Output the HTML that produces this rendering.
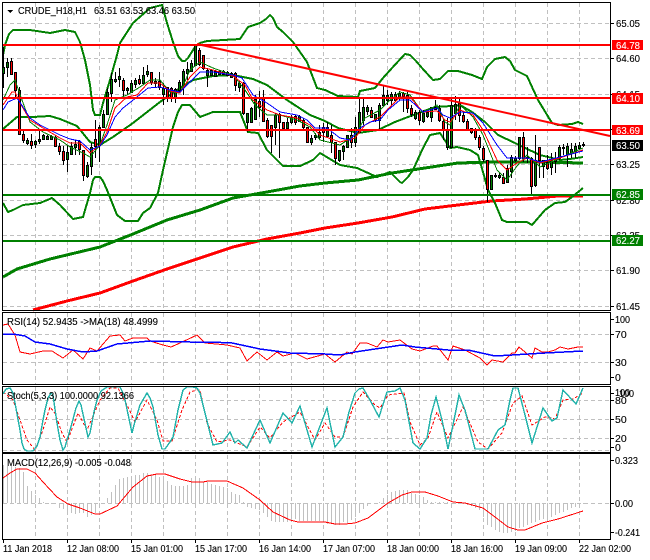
<!DOCTYPE html>
<html>
<head>
<meta charset="utf-8">
<style>
html,body{margin:0;padding:0;background:#fff;width:650px;height:560px;overflow:hidden}
svg{display:block;position:absolute;left:0;top:0}
text{font-family:"Liberation Sans",sans-serif;font-size:10.5px;fill:#000;stroke:#000;stroke-width:.12px}
.w{fill:#fff;stroke:#fff}
polyline{fill:none;shape-rendering:crispEdges}
.c{shape-rendering:crispEdges}
</style>
</head>
<body>
<svg width="650" height="560" viewBox="0 0 650 560" xmlns="http://www.w3.org/2000/svg">
<rect width="650" height="560" fill="#fff"/>
<!-- grid -->
<g class="c" stroke="#c0c0c0" stroke-width="1" stroke-dasharray="4 3" fill="none">
<path d="M3 23.5H610M3 58.5H610M3 94.5H610M3 129.5H610M3 164.5H610M3 200.5H610M3 235.5H610M3 270.5H610M3 306.5H610"/>
<path d="M3 334.5H610M3 362.5H610M3 400.5H610M3 419.5H610M3 438.5H610M3 450.5H610"/>
<path d="M35.5 3V310M67.5 3V310M99.5 3V310M131.5 3V310M163.5 3V310M195.5 3V310M227.5 3V310M259.5 3V310M291.5 3V310M323.5 3V310M355.5 3V310M387.5 3V310M419.5 3V310M451.5 3V310M483.5 3V310M515.5 3V310M547.5 3V310M579.5 3V310"/>
<path d="M35.5 313V384M67.5 313V384M99.5 313V384M131.5 313V384M163.5 313V384M195.5 313V384M227.5 313V384M259.5 313V384M291.5 313V384M323.5 313V384M355.5 313V384M387.5 313V384M419.5 313V384M451.5 313V384M483.5 313V384M515.5 313V384M547.5 313V384M579.5 313V384"/>
<path d="M35.5 387V452M67.5 387V452M99.5 387V452M131.5 387V452M163.5 387V452M195.5 387V452M227.5 387V452M259.5 387V452M291.5 387V452M323.5 387V452M355.5 387V452M387.5 387V452M419.5 387V452M451.5 387V452M483.5 387V452M515.5 387V452M547.5 387V452M579.5 387V452"/>
<path d="M35.5 455V539M67.5 455V539M99.5 455V539M131.5 455V539M163.5 455V539M195.5 455V539M227.5 455V539M259.5 455V539M291.5 455V539M323.5 455V539M355.5 455V539M387.5 455V539M419.5 455V539M451.5 455V539M483.5 455V539M515.5 455V539M547.5 455V539M579.5 455V539"/>
<path d="M3 503.5H610"/>
</g>
<path class="c" d="M3 145.5H610" stroke="#c0c0c0" fill="none"/>

<!-- big MAs -->
<polyline stroke="#008000" stroke-width="3" points="3,277 17,269 50,259 100,247 133,234 167,220 200,210 233,198 267,192 300,186 325,183 358,180 392,173 425,168 458,163 492,162 540,162 583,163"/>
<polyline stroke="#ff0000" stroke-width="3" points="33,310 67,301 100,293 133,281 167,269 200,258 233,247 267,239 300,233 325,228 358,223 392,217 425,209 458,205 492,201 525,199 558,196 583,196"/>

<!-- Bollinger -->
<g stroke="#008000" stroke-width="2">
<polyline points="3,55 5,45 9,34 13,30 30,30 50,33 65,30 75,32 80,42 85,60 90,85 93,110 95,115 100,115 103,103 110,80 117,55 120,43 133,23 150,8 162,5 167,23 173,42 178,56 182,61 185,61 188,58 195,47 200,43 207,41 240,39 248,27 260,23 266,19 270,15 273,18 277,27 283,32 293,42 307,62 317,88 325,90 338,96 358,97 360,91 375,88 383,78 392,68 405,54 410,55 416,61 422,68 433,80 440,79 448,71 458,71 472,75 482,79 487,67 495,59 505,57 510,61 515,70 527,76 538,100 552,123 558,125 572,124 578,122 583,124"/>
<polyline points="3,129 17,117 33,117 50,116 60,119 77,126 90,142 100,145 113,137 133,123 160,102 180,88 193,80 213,76 233,75 253,79 267,85 287,100 310,115 325,121 338,128 358,133 378,130 395,122 408,117 435,107 452,106 460,105 472,112 485,122 498,135 515,143 523,147 540,155 560,160 570,159 583,157"/>
<polyline points="3,203 8,212 13,210 23,205 40,203 52,198 60,205 73,219 83,217 90,193 93,180 95,177 100,177 103,181 107,190 117,215 125,221 138,221 143,213 150,208 158,193 163,170 173,127 178,112 182,105 190,105 200,117 213,112 240,112 248,132 258,133 267,150 283,166 300,166 313,160 320,153 340,165 357,168 377,177 390,172 400,182 402,183 408,177 413,170 423,148 430,135 440,133 450,148 457,147 470,150 478,155 483,172 488,190 495,203 502,220 507,222 527,222 532,225 545,210 555,203 565,202 572,197 583,188"/>
</g>

<!-- wicks -->
<path class="c" stroke="#000" fill="none" d="M3.5 47V88M7.5 58V77M11.5 58V75M15.5 72V98M19.5 87V135M23.5 130V143M27.5 138V145M31.5 134V149M35.5 140V148M39.5 129V144M43.5 134V140M47.5 135V140M51.5 135V140M55.5 136V146M59.5 143V155M63.5 146V165M67.5 145V172M71.5 142V155M75.5 140V155M79.5 140V155M83.5 150V181M87.5 162V178M91.5 143V175M95.5 120V158M99.5 125V162M103.5 110V128M107.5 88V115M111.5 73V102M115.5 72V83M119.5 68V87M123.5 78V97M127.5 87V95M131.5 80V93M135.5 78V88M139.5 75V85M143.5 67V85M147.5 65V77M151.5 72V85M155.5 78V88M159.5 72V90M163.5 83V105M167.5 87V102M171.5 87V102M175.5 88V103M179.5 80V93M183.5 69V95M187.5 62V80M191.5 60V72M195.5 44V66M199.5 48V66M203.5 55V70M207.5 68V87M211.5 69V76M215.5 70V77M219.5 70V75M223.5 70V75M227.5 71V76M231.5 72V78M235.5 72V91M239.5 81V92M243.5 82V115M247.5 113V132M251.5 107V122M255.5 95V120M259.5 91V117M263.5 90V122M267.5 118V138M271.5 125V153M275.5 113V145M279.5 113V158M283.5 122V130M287.5 118V130M291.5 115V124M295.5 115V125M299.5 115V122M303.5 118V129M307.5 127V143M311.5 135V145M315.5 133V140M319.5 125V140M323.5 123V142M327.5 122V138M331.5 125V153M335.5 142V165M339.5 150V162M343.5 145V160M347.5 135V148M351.5 128V148M355.5 117V147M359.5 97V133M363.5 98V125M367.5 105V115M371.5 107V118M375.5 114V122M379.5 103V130M383.5 85V107M387.5 90V105M391.5 92V105M395.5 92V102M399.5 91V100M403.5 92V112M407.5 92V113M411.5 105V117M415.5 110V120M419.5 110V125M423.5 110V123M427.5 110V118M431.5 107V122M435.5 100V110M439.5 105V122M443.5 118V140M447.5 118V150M451.5 97V148M455.5 96V120M459.5 97V122M463.5 112V123M467.5 119V131M471.5 128V134M475.5 128V140M479.5 135V150M483.5 146V162M487.5 160V202M491.5 175V190M495.5 173V178M499.5 173V179M503.5 173V183M507.5 165V183M511.5 155V178M515.5 156V162M519.5 137V160M523.5 132V162M527.5 147V163M531.5 157V194M535.5 135V187M539.5 147V178M543.5 160V178M547.5 155V170M551.5 153V175M555.5 152V173M559.5 145V160M563.5 144V155M567.5 143V167M571.5 143V158M575.5 143V158M579.5 142V150M583.5 142V147"/>
<!-- green bodies -->
<path class="c" stroke="#000" fill="#008000" d="M2.5 67.5h2v6h-2zM6.5 62.5h2v5h-2zM26.5 140.5h2v3h-2zM34.5 141.5h2v3h-2zM38.5 139.5h2v2h-2zM42.5 135.5h2v4h-2zM46.5 136.5h2v3h-2zM50.5 136.5h2v3h-2zM66.5 152.5h2v7h-2zM70.5 146.5h2v8h-2zM74.5 144.5h2v3h-2zM86.5 165.5h2v11h-2zM90.5 147.5h2v19h-2zM98.5 127.5h2v18h-2zM102.5 114.5h2v13h-2zM106.5 92.5h2v22h-2zM110.5 79.5h2v14h-2zM114.5 79.5h2v2h-2zM118.5 76.5h2v3h-2zM126.5 88.5h2v2h-2zM130.5 83.5h2v9h-2zM134.5 80.5h2v4h-2zM142.5 75.5h2v8h-2zM146.5 71.5h2v3h-2zM154.5 81.5h2v2h-2zM162.5 88.5h2v6h-2zM174.5 89.5h2v8h-2zM178.5 82.5h2v8h-2zM182.5 71.5h2v14h-2zM186.5 69.5h2v4h-2zM190.5 63.5h2v8h-2zM194.5 44.5h2v21h-2zM206.5 70.5h2v5h-2zM210.5 70.5h2v5h-2zM214.5 71.5h2v5h-2zM218.5 71.5h2v3h-2zM226.5 72.5h2v3h-2zM230.5 73.5h2v4h-2zM238.5 83.5h2v4h-2zM246.5 113.5h2v9h-2zM250.5 108.5h2v14h-2zM254.5 99.5h2v20h-2zM274.5 115.5h2v12h-2zM286.5 122.5h2v6h-2zM290.5 117.5h2v5h-2zM298.5 116.5h2v5h-2zM310.5 138.5h2v4h-2zM314.5 135.5h2v2h-2zM318.5 132.5h2v5h-2zM326.5 127.5h2v9h-2zM338.5 150.5h2v10h-2zM342.5 146.5h2v5h-2zM346.5 135.5h2v12h-2zM354.5 127.5h2v15h-2zM358.5 112.5h2v20h-2zM362.5 107.5h2v13h-2zM366.5 107.5h2v4h-2zM374.5 114.5h2v6h-2zM378.5 105.5h2v15h-2zM382.5 95.5h2v10h-2zM386.5 95.5h2v5h-2zM390.5 94.5h2v6h-2zM398.5 93.5h2v5h-2zM414.5 112.5h2v6h-2zM422.5 113.5h2v8h-2zM426.5 112.5h2v4h-2zM430.5 107.5h2v10h-2zM434.5 107.5h2v2h-2zM446.5 130.5h2v17h-2zM450.5 105.5h2v42h-2zM454.5 104.5h2v9h-2zM490.5 175.5h2v14h-2zM494.5 175.5h2v1h-2zM498.5 175.5h2v2h-2zM506.5 168.5h2v14h-2zM510.5 157.5h2v14h-2zM514.5 158.5h2v2h-2zM518.5 137.5h2v21h-2zM526.5 157.5h2v1h-2zM534.5 160.5h2v25h-2zM542.5 160.5h2v6h-2zM550.5 160.5h2v7h-2zM554.5 158.5h2v3h-2zM558.5 147.5h2v11h-2zM562.5 147.5h2v1h-2zM566.5 146.5h2v8h-2zM570.5 149.5h2v4h-2zM574.5 146.5h2v5h-2zM578.5 145.5h2v3h-2zM582.5 144.5h2v1h-2z"/>
<!-- red bodies -->
<path class="c" stroke="#000" fill="#ff0000" d="M10.5 61.5h2v13h-2zM14.5 72.5h2v18h-2zM18.5 90.5h2v44h-2zM22.5 134.5h2v6h-2zM30.5 141.5h2v4h-2zM54.5 137.5h2v9h-2zM58.5 146.5h2v5h-2zM62.5 151.5h2v9h-2zM78.5 141.5h2v8h-2zM82.5 150.5h2v25h-2zM94.5 139.5h2v7h-2zM122.5 80.5h2v10h-2zM138.5 79.5h2v4h-2zM150.5 72.5h2v10h-2zM158.5 81.5h2v6h-2zM166.5 87.5h2v10h-2zM170.5 88.5h2v10h-2zM198.5 50.5h2v14h-2zM202.5 55.5h2v13h-2zM222.5 71.5h2v3h-2zM234.5 73.5h2v12h-2zM242.5 83.5h2v30h-2zM258.5 101.5h2v6h-2zM262.5 98.5h2v23h-2zM266.5 120.5h2v16h-2zM270.5 125.5h2v11h-2zM278.5 114.5h2v8h-2zM282.5 122.5h2v6h-2zM294.5 116.5h2v6h-2zM302.5 120.5h2v7h-2zM306.5 127.5h2v15h-2zM322.5 127.5h2v5h-2zM330.5 135.5h2v7h-2zM334.5 142.5h2v16h-2zM350.5 135.5h2v7h-2zM370.5 110.5h2v7h-2zM394.5 94.5h2v6h-2zM402.5 93.5h2v3h-2zM406.5 95.5h2v13h-2zM410.5 108.5h2v6h-2zM418.5 112.5h2v8h-2zM438.5 108.5h2v12h-2zM442.5 121.5h2v9h-2zM458.5 103.5h2v12h-2zM462.5 115.5h2v6h-2zM466.5 121.5h2v8h-2zM470.5 128.5h2v4h-2zM474.5 130.5h2v7h-2zM478.5 137.5h2v10h-2zM482.5 148.5h2v11h-2zM486.5 160.5h2v29h-2zM502.5 177.5h2v6h-2zM522.5 137.5h2v21h-2zM530.5 158.5h2v28h-2zM538.5 147.5h2v13h-2zM546.5 162.5h2v6h-2z"/>

<!-- small MAs -->
<polyline stroke="#008000" stroke-width="1" points="3,100 10,85 15,80 22,100 30,122 43,132 60,140 70,147 83,153 90,157 100,145 107,125 115,100 127,95 140,87 150,80 160,80 170,92 180,93 190,70 200,62 213,68 233,75 245,90 255,105 267,115 280,115 297,120 310,127 320,140 340,145 355,135 365,118 380,110 390,100 400,92 410,95 423,113 437,105 445,122 450,125 460,105 473,117 483,135 497,170 507,180 517,166 527,155 540,167 560,158 583,148"/>
<polyline stroke="#ff0000" stroke-width="1" points="3,105 12,92 15,92 20,103 30,120 43,128 60,138 70,143 80,143 90,153 100,145 107,132 115,108 127,97 137,95 148,83 160,83 170,91 180,93 190,77 200,67 213,70 233,76 245,85 253,100 267,110 280,115 297,118 310,125 320,135 340,142 355,138 365,125 380,117 390,107 400,97 410,97 423,112 437,111 445,120 450,122 460,110 473,115 483,130 497,160 507,170 517,163 527,158 540,163 560,158 583,150"/>
<polyline stroke="#0000ff" stroke-width="1" points="3,110 8,102 17,98 23,107 30,118 40,125 50,130 60,135 70,139 80,141 90,150 100,146 107,135 115,117 123,108 137,97 148,88 160,87 170,90 180,92 190,82 200,72 213,72 233,75 242,78 253,95 267,103 280,112 297,115 307,120 315,128 327,128 340,138 350,140 360,128 370,122 380,120 388,110 400,100 410,100 423,112 437,108 443,115 450,118 460,112 473,113 483,123 497,145 507,158 517,158 527,158 540,162 560,157 583,151"/>

<!-- horizontal and trend lines -->
<g class="c" stroke-width="2" fill="none">
<path stroke="#ff0000" d="M3 45H610M3 98H610M3 130H610"/>
<path stroke="#008000" d="M3 195H610M3 241H610"/>
</g>
<line x1="197" y1="44" x2="610" y2="136" stroke="#ff0000" stroke-width="2"/>

<!-- RSI -->
<polyline stroke="#ff0000" stroke-width="1" points="3,325 8,324 15,335 20,352 30,354 43,351 52,351 63,358 73,350 83,359 90,348 97,351 110,336 120,335 125,341 133,338 147,338 150,341 163,345 171,347 180,343 197,335 205,343 227,345 240,348 247,361 257,352 267,360 277,352 283,356 295,353 307,359 325,354 335,362 347,352 352,354 360,343 367,343 377,347 383,340 388,342 400,340 412,349 420,351 433,346 437,346 448,360 453,346 465,350 480,358 487,365 492,360 503,362 512,353 515,353 519,347 525,352 532,358 535,348 542,352 548,352 555,350 560,347 568,349 578,347 583,347"/>
<polyline stroke="#0000ff" stroke-width="1.5" points="3,334 13,334 25,336 35,342 50,344 67,349 83,352 97,351 117,344 150,341 190,342 210,342 232,343 260,349 290,353 325,354 340,355 355,352 375,349 402,345 415,347 448,350 468,350 495,356 512,355 545,353 583,351"/>

<!-- Stoch -->
<polyline stroke="#ff0000" stroke-width="1" stroke-dasharray="3 2" points="3,392 13,400 20,420 27,440 35,450 42,433 50,407 55,413 62,433 67,442 78,413 87,430 100,400 110,388 118,388 128,407 135,422 147,400 157,420 163,441 172,441 182,410 190,392 197,390 200,390 207,423 217,442 230,440 247,447 260,427 270,438 283,422 300,412 315,440 325,423 335,437 343,437 353,407 363,392 375,405 380,408 388,395 404,393 410,422 420,445 428,438 437,412 448,438 463,407 478,442 488,449 502,433 513,403 522,396 532,425 545,417 555,419 563,400 573,399 583,393"/>
<polyline stroke="#20b2aa" stroke-width="1.4" points="3,394 6,389 10,388 13,393 15,403 20,430 22,443 24,449 27,451 33,451 37,446 40,437 43,420 45,410 48,398 51,393 53,395 57,423 60,440 63,450 65,447 68,437 72,423 76,408 79,401 81,405 88,437 90,433 94,412 97,400 101,391 107,387 120,387 124,395 132,433 134,425 140,405 147,393 150,398 153,407 158,435 162,449 165,449 170,442 173,437 178,410 183,390 187,387 193,387 197,388 200,393 213,445 222,443 230,432 235,443 238,440 247,448 253,435 260,420 270,443 283,413 292,423 300,406 312,447 325,413 327,408 335,447 343,437 349,412 355,393 359,389 363,388 370,400 379,417 387,392 395,391 400,388 405,400 413,443 420,449 427,438 431,415 436,397 442,420 448,449 454,420 459,395 465,410 475,449 488,449 498,430 505,425 510,400 513,388 518,388 525,415 532,443 543,408 552,421 557,418 563,390 576,404 583,388"/>

<!-- MACD histogram -->
<path class="c" stroke="#c0c0c0" fill="none" d="M3.5 503V465M7.5 503V466M11.5 503V465M15.5 503V467M19.5 503V468M23.5 503V472M27.5 503V486M31.5 503V491M35.5 503V495M39.5 503V498M43.5 503V502M47.5 503V504M51.5 503V504M55.5 503V504M59.5 503V508M63.5 503V509M67.5 503V515M71.5 503V513M75.5 503V514M79.5 503V513M83.5 503V513M87.5 503V517M91.5 503V515M95.5 503V513M99.5 503V508M103.5 503V504M107.5 503V498M111.5 503V492M115.5 503V485M119.5 503V479M123.5 503V478M127.5 503V477M131.5 503V476M135.5 503V475M139.5 503V475M143.5 503V473M147.5 503V473M151.5 503V475M155.5 503V475M159.5 503V477M163.5 503V478M167.5 503V481M171.5 503V485M175.5 503V486M179.5 503V486M183.5 503V486M187.5 503V485M191.5 503V478M195.5 503V478M199.5 503V478M203.5 503V482M207.5 503V482M211.5 503V484M215.5 503V485M219.5 503V486M223.5 503V487M227.5 503V488M231.5 503V492M235.5 503V494M239.5 503V495M243.5 503V502M247.5 503V507M251.5 503V508M255.5 503V509M259.5 503V510M263.5 503V513M267.5 503V517M271.5 503V521M275.5 503V522M279.5 503V522M283.5 503V522M287.5 503V522M291.5 503V521M295.5 503V519M299.5 503V521M303.5 503V521M307.5 503V521M311.5 503V521M315.5 503V521M319.5 503V521M323.5 503V521M327.5 503V524M331.5 503V524M335.5 503V525M339.5 503V525M343.5 503V522M347.5 503V523M351.5 503V520M355.5 503V517M359.5 503V513M363.5 503V509M367.5 503V506M371.5 503V503M375.5 503V503M379.5 503V502M383.5 503V498M387.5 503V495M391.5 503V492M395.5 503V491M399.5 503V490M403.5 503V490M407.5 503V490M411.5 503V493M415.5 503V494M419.5 503V495M423.5 503V497M427.5 503V500M431.5 503V502M435.5 503V502M439.5 503V502M443.5 503V502M447.5 503V502M451.5 503V503M455.5 503V504M459.5 503V504M463.5 503V504M467.5 503V505M471.5 503V506M475.5 503V508M479.5 503V510M483.5 503V517M487.5 503V525M491.5 503V527M495.5 503V530M499.5 503V532M503.5 503V533M507.5 503V533M511.5 503V532M515.5 503V531M519.5 503V528M523.5 503V527M527.5 503V525M531.5 503V523M535.5 503V522M539.5 503V520M543.5 503V519M547.5 503V518M551.5 503V517M555.5 503V515M559.5 503V513M563.5 503V512M567.5 503V510M571.5 503V508M575.5 503V507M579.5 503V505M583.5 503V504"/>
<polyline stroke="#ff0000" stroke-width="1" points="3,478 10,473 17,469 27,469 35,473 43,482 57,497 68,504 80,508 95,514 100,514 117,506 133,487 147,476 157,474 165,474 180,479 192,482 203,482 208,481 227,481 243,488 260,500 273,512 290,520 298,522 325,522 335,524 345,524 355,523 368,518 388,503 402,495 412,492 425,492 438,496 453,502 465,503 483,508 495,517 508,527 518,530 525,530 542,523 558,519 583,511"/>

<!-- frames -->
<g class="c" fill="none" stroke="#000" stroke-width="1">
<path d="M2.5 2.5H610.5V310.5H2.5Z"/>
<path d="M2.5 312.5H610.5V384.5H2.5Z"/>
<path d="M2.5 386.5H610.5V452.5H2.5Z"/>
<path d="M2.5 453.5H610.5V539.5H2.5Z"/>
<path d="M611 23.5h3M611 58.5h3M611 94.5h3M611 129.5h3M611 164.5h3M611 200.5h3M611 235.5h3M611 270.5h3M611 306.5h3M611 319.5h3M611 334.5h3M611 362.5h3M611 377.5h3M611 393.5h3M611 400.5h3M611 419.5h3M611 438.5h3M611 447.5h3M611 460.5h3M611 503.5h3M611 532.5h3"/>
<path d="M3.5 540v3M67.5 540v3M131.5 540v3M195.5 540v3M259.5 540v3M323.5 540v3M387.5 540v3M451.5 540v3M515.5 540v3M579.5 540v3"/>
</g>

<!-- axis labels -->
<text x="616" y="27" textLength="24" lengthAdjust="spacingAndGlyphs">65.05</text>
<text x="616" y="62" textLength="24" lengthAdjust="spacingAndGlyphs">64.60</text>
<text x="616" y="98" textLength="24" lengthAdjust="spacingAndGlyphs">64.15</text>
<text x="616" y="133" textLength="24" lengthAdjust="spacingAndGlyphs">63.70</text>
<text x="616" y="168" textLength="24" lengthAdjust="spacingAndGlyphs">63.25</text>
<text x="616" y="204" textLength="24" lengthAdjust="spacingAndGlyphs">62.80</text>
<text x="616" y="239" textLength="24" lengthAdjust="spacingAndGlyphs">62.35</text>
<text x="616" y="274" textLength="24" lengthAdjust="spacingAndGlyphs">61.90</text>
<text x="616" y="310" textLength="24" lengthAdjust="spacingAndGlyphs">61.45</text>

<rect class="c" x="612" y="40" width="31" height="10" fill="#ff0000"/>
<text class="w" x="616" y="49" textLength="24" lengthAdjust="spacingAndGlyphs">64.78</text>
<rect class="c" x="612" y="93" width="31" height="11" fill="#ff0000"/>
<text class="w" x="616" y="102" textLength="24" lengthAdjust="spacingAndGlyphs">64.10</text>
<rect class="c" x="612" y="125" width="31" height="10" fill="#ff0000"/>
<text class="w" x="616" y="134" textLength="24" lengthAdjust="spacingAndGlyphs">63.69</text>
<rect class="c" x="612" y="140" width="31" height="11" fill="#000"/>
<text class="w" x="616" y="149" textLength="24" lengthAdjust="spacingAndGlyphs">63.50</text>
<rect class="c" x="612" y="189" width="31" height="11" fill="#008000"/>
<text class="w" x="616" y="198" textLength="24" lengthAdjust="spacingAndGlyphs">62.85</text>
<rect class="c" x="612" y="235" width="31" height="11" fill="#008000"/>
<text class="w" x="616" y="244" textLength="24" lengthAdjust="spacingAndGlyphs">62.27</text>

<text x="615" y="323" textLength="15" lengthAdjust="spacingAndGlyphs">100</text>
<text x="615" y="338">70</text>
<text x="615" y="366">30</text>
<text x="615" y="381">0</text>
<text x="615" y="396" textLength="15" lengthAdjust="spacingAndGlyphs">100</text>
<text x="619" y="397" textLength="15" lengthAdjust="spacingAndGlyphs">100</text>
<text x="615" y="404">80</text>
<text x="615" y="423">50</text>
<text x="615" y="442">20</text>
<text x="615" y="451">0</text>
<text x="615" y="464" textLength="23" lengthAdjust="spacingAndGlyphs">0.323</text>
<text x="615" y="507" textLength="18" lengthAdjust="spacingAndGlyphs">0.00</text>
<text x="615" y="536" textLength="25" lengthAdjust="spacingAndGlyphs">-0.241</text>

<!-- time labels -->
<text x="3" y="552" textLength="49" lengthAdjust="spacingAndGlyphs">11 Jan 2018</text>
<text x="67" y="552" textLength="52" lengthAdjust="spacingAndGlyphs">12 Jan 08:00</text>
<text x="131" y="552" textLength="52" lengthAdjust="spacingAndGlyphs">15 Jan 01:00</text>
<text x="195" y="552" textLength="52" lengthAdjust="spacingAndGlyphs">15 Jan 17:00</text>
<text x="259" y="552" textLength="52" lengthAdjust="spacingAndGlyphs">16 Jan 14:00</text>
<text x="323" y="552" textLength="52" lengthAdjust="spacingAndGlyphs">17 Jan 07:00</text>
<text x="387" y="552" textLength="52" lengthAdjust="spacingAndGlyphs">18 Jan 00:00</text>
<text x="451" y="552" textLength="52" lengthAdjust="spacingAndGlyphs">18 Jan 16:00</text>
<text x="515" y="552" textLength="52" lengthAdjust="spacingAndGlyphs">19 Jan 09:00</text>
<text x="579" y="552" textLength="52" lengthAdjust="spacingAndGlyphs">22 Jan 02:00</text>

<!-- headers -->
<path class="c" d="M7 10h6l-3 3z" fill="#000"/>
<text x="18" y="14" textLength="69" lengthAdjust="spacingAndGlyphs">CRUDE_H18,H1</text>
<text x="94" y="14" textLength="101" lengthAdjust="spacingAndGlyphs">63.51 63.53 63.46 63.50</text>
<text x="7" y="325" textLength="151" lengthAdjust="spacingAndGlyphs">RSI(14) 52.9435  -&gt;MA(18) 48.4999</text>
<text x="7" y="399" textLength="127" lengthAdjust="spacingAndGlyphs">Stoch(5,3,3) 100.0000 92.1366</text>
<text x="7" y="466" textLength="124" lengthAdjust="spacingAndGlyphs">MACD(12,26,9) -0.005 -0.048</text>
</svg>
</body>
</html>
